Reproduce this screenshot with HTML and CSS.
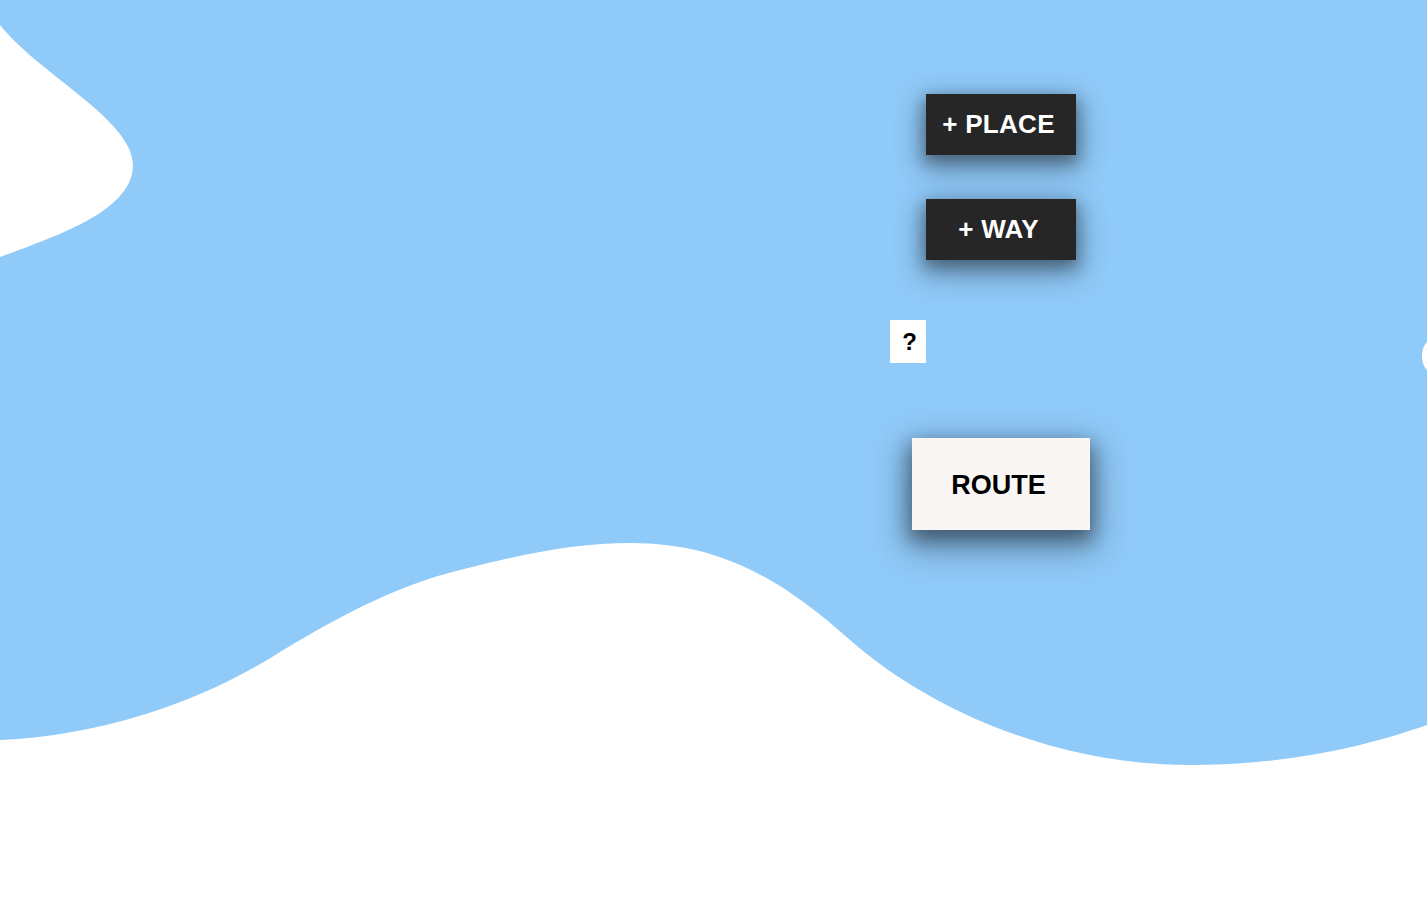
FILE: index.html
```html
<!DOCTYPE html>
<html lang="en">
<head>
<meta charset="utf-8">
<title>Route planner</title>
<link rel="stylesheet" href="styles.css">
</head>
<body>
<div class="map">
  <svg class="map-bg" width="1427" height="900" viewBox="0 0 1427 900" xmlns="http://www.w3.org/2000/svg">
    <path fill="#90CAF9" d="M0 0 L1427 0 L1427 342 C1424 345 1422 350 1422 356 C1422 362 1424 367 1427 370 L1427 725 C1370 745 1290 765 1191 765 C1050 765 925 706 850 640 C780 578 720 543 630 543 C580 543 530 552 460 570 C400 585 350 610 280 652 C210 697 110 735 0 740 L0 257 C60 235 133 210 133 165 C133 120 40 75 0 25 Z"/>
  </svg>
  <div class="controls">
    <button class="btn btn-dark">+ PLACE</button>
    <button class="btn btn-dark">+ WAY</button>
    <button class="btn-help">?</button>
    <button class="btn btn-route">ROUTE</button>
  </div>
</div>
</body>
</html>
```

FILE: styles.css
```css
html, body {
  margin: 0;
  padding: 0;
  background: #ffffff;
  overflow: hidden;
  font-family: "Liberation Sans", Arial, sans-serif;
}

.map {
  position: relative;
  width: 1427px;
  height: 900px;
}

.map-bg {
  position: absolute;
  left: 0;
  top: 0;
  display: block;
}

.controls {
  position: absolute;
  left: 890px;
  top: 94px;
  width: 222px;
  display: flex;
  flex-direction: column;
  align-items: center;
}

.btn {
  border: none;
  margin: 0;
  padding: 0 5px 0 0;
  box-sizing: border-box;
  font-family: "Liberation Sans", Arial, sans-serif;
  font-weight: bold;
  cursor: pointer;
  display: flex;
  align-items: center;
  justify-content: center;
}

.btn-dark {
  width: 150px;
  height: 61px;
  background: #262626;
  color: #ffffff;
  font-size: 26px;
  letter-spacing: 0.3px;
  box-shadow: 0 6px 14px 2px rgba(0, 0, 0, 0.3), 0 10px 30px 4px rgba(0, 0, 0, 0.32);
}

.btn-dark + .btn-dark {
  margin-top: 44px;
}

.btn-help {
  align-self: flex-start;
  margin-top: 60px;
  width: 36px;
  height: 43px;
  border: none;
  padding: 0 0 0 3px;
  box-sizing: border-box;
  background: #ffffff;
  color: #000000;
  font-family: "Liberation Sans", Arial, sans-serif;
  font-weight: bold;
  font-size: 24px;
  display: flex;
  align-items: center;
  justify-content: center;
}

.btn-route {
  margin-top: 75px;
  width: 178px;
  height: 92px;
  background: #faf6f5;
  color: #000000;
  font-size: 27px;
  padding-top: 2px;
  box-shadow: 0 8px 16px 2px rgba(0, 0, 0, 0.32), 0 12px 34px 6px rgba(0, 0, 0, 0.36);
}
```
